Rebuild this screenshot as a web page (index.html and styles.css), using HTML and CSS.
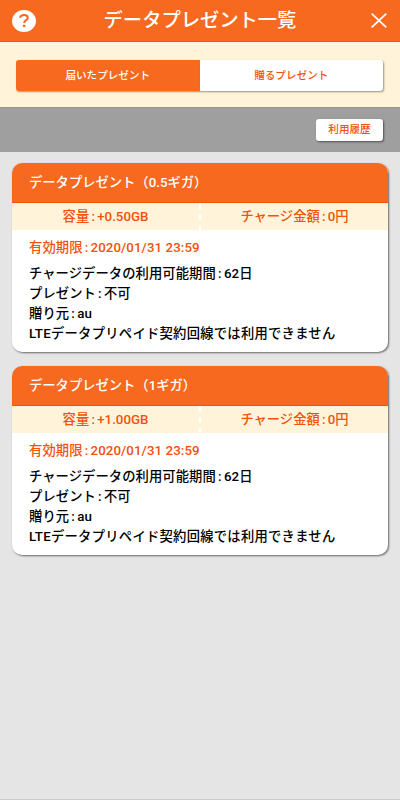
FILE: index.html
```
<!DOCTYPE html>
<html lang="ja">
<head>
  <meta charset="UTF-8">
  <meta name="viewport" content="width=device-width, initial-scale=1.0">
  <title>データプレゼント一覧</title>
  <link rel="stylesheet" href="styles.css">
</head>
<body>
  <header class="header">
    <svg class="help" viewBox="0 0 24 22">
      <ellipse cx="12" cy="11" rx="12" ry="11" fill="#fff"/>
      <path d="M8 7.7C8.4 5.7 9.9 5 12 5c2.3 0 3.8 1.1 3.8 2.7 0 2.4-3.6 2.4-3.6 5.2" fill="none" stroke="#f7691e" stroke-width="2"/>
      <rect x="10.9" y="14.8" width="2.5" height="2.3" rx=".6" fill="#f7691e"/>
    </svg>
    <h1>データプレゼント一覧</h1>
    <svg class="close" viewBox="0 0 16 15"><path d="M.7.7l14.6 13.6M15.3.7L.7 14.3" stroke="#fff" stroke-width="1.8"/></svg>
  </header>
  <nav class="tabs">
    <div class="tab active">届いたプレゼント</div>
    <div class="tab">贈るプレゼント</div>
  </nav>
  <div class="toolbar"><button class="history">利用履歴</button></div>
  <main class="list">
    <section class="card">
      <h2>データプレゼント（0.5ギガ）</h2>
      <div class="summary">
        <div>容量<span class="colon">:</span>+0.50GB</div>
        <div>チャージ金額<span class="colon">:</span>0円</div>
      </div>
      <div class="detail">
        <p class="expire">有効期限<span class="colon">:</span>2020/01/31 23:59</p>
        <p>チャージデータの利用可能期間<span class="colon">:</span>62日</p>
        <p>プレゼント<span class="colon">:</span>不可</p>
        <p>贈り元<span class="colon">:</span>au</p>
        <p class="note">LTEデータプリペイド契約回線では利用できません</p>
      </div>
    </section>
    <section class="card">
      <h2>データプレゼント（1ギガ）</h2>
      <div class="summary">
        <div>容量<span class="colon">:</span>+1.00GB</div>
        <div>チャージ金額<span class="colon">:</span>0円</div>
      </div>
      <div class="detail">
        <p class="expire">有効期限<span class="colon">:</span>2020/01/31 23:59</p>
        <p>チャージデータの利用可能期間<span class="colon">:</span>62日</p>
        <p>プレゼント<span class="colon">:</span>不可</p>
        <p>贈り元<span class="colon">:</span>au</p>
        <p class="note">LTEデータプリペイド契約回線では利用できません</p>
      </div>
    </section>
  </main>
</body>
</html>
```
FILE: styles.css
```
* { box-sizing: border-box; margin: 0; padding: 0; }
body { display: flex; flex-direction: column; min-height: 100vh; background: #e5e5e5; border-bottom: 1px solid #ccc; color: #000; font: 500 13.3px/20px Roboto, "Noto Sans CJK JP", sans-serif; }
.header { display: flex; align-items: center; justify-content: space-between; height: 42px; padding: 0 13px 0 12px; background: #f7691e; border-bottom: 1px solid #f2560a; color: #fff; }
.header h1 { padding: 1px 7px 0 0; font-size: 19.3px; font-weight: 500; line-height: 40px; }
.help { width: 24px; height: 22px; }
.close { width: 16px; height: 15px; }
.tabs { display: flex; height: 65px; padding: 18px 17px 16px 16px; background: #fff4d9; }
.tab { flex: 1; height: 31px; background: #fff; color: #f4510b; font-size: 10.6px; line-height: 31px; text-align: center; border-radius: 0 3px 3px 0; box-shadow: 1px 1px 2px rgba(0,0,0,0.4); }
.tab.active { background: #f7691e; color: #fff; border-radius: 3px 0 0 3px; }
.toolbar { display: flex; justify-content: flex-end; height: 45px; padding: 11px 17px 0 0; background: #9f9f9f; border-top: 1px solid #949494; }
.history { width: 67px; height: 22px; border: 0; border-radius: 3px; background: #fff; color: #f4510b; font: inherit; font-size: 10.6px; line-height: 22px; box-shadow: 1px 1px 2px rgba(0,0,0,0.5); }
.list { display: flex; flex-direction: column; gap: 14px; padding: 11px 12px; }
.card { height: 189px; background: #fff; border-radius: 10px; overflow: hidden; box-shadow: 1px 1px 2px rgba(0,0,0,0.55); }
.card h2 { height: 40px; padding-left: 17px; background: #f7691e; border-bottom: 1px solid #f4510b; color: #fff; font-size: 13.3px; font-weight: 500; line-height: 39px; }
.summary { display: grid; grid-template-columns: 187px 1fr; height: 27px; background: #fff4d9; color: #f4510b; line-height: 28px; text-align: center; }
.summary div + div { border-left: 2px dashed #fff; }
.detail { padding: 8px 17px 0; letter-spacing: 0.08px; }
.detail .expire { margin-bottom: 6px; color: #f4510b; }
.note { letter-spacing: 0.27px; }
.colon { display: inline-block; width: 8px; text-align: center; }
```
